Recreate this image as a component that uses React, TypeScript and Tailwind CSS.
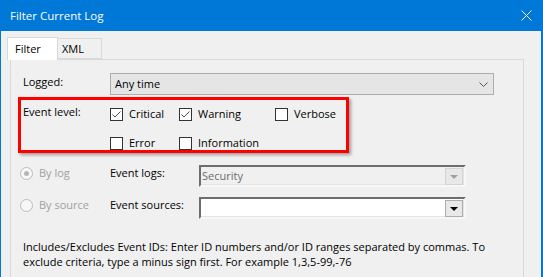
import React from 'react';

const font = "font-['Segoe_UI','Open_Sans',sans-serif]";

function Check({ checked, label }: { checked?: boolean; label: string }) {
  return (
    <div className="flex items-center h-[17px]">
      <span className="w-[13px] h-[13px] border border-[#333] bg-white flex items-center justify-center shrink-0">
        {checked && (
          <svg width="11" height="11" viewBox="0 0 11 11">
            <path d="M1.5 5.5 L4 8 L9.5 2.5" fill="none" stroke="#4d4d4d" strokeWidth="1" />
          </svg>
        )}
      </span>
      <span className="ml-[6px]">{label}</span>
    </div>
  );
}

function Radio({ selected, label }: { selected?: boolean; label: string }) {
  return (
    <div className="relative -top-[3px] flex items-center w-[90px] text-[#a0a0a0]">
      <span className="w-[13px] h-[13px] rounded-full border border-[#bcbcbc] bg-[#f7f7f7] flex items-center justify-center shrink-0">
        {selected && <span className="w-[5px] h-[5px] rounded-full bg-[#b5b5b5]" />}
      </span>
      <span className="ml-[6px]">{label}</span>
    </div>
  );
}

function Combo({ value, disabled }: { value?: string; disabled?: boolean }) {
  return (
    <div
      className={[
        'relative w-[267px] h-[22px] border-2 border-t-[#6d6d6d] border-l-[#6d6d6d] border-r-[#f7f7f7] border-b-[#f7f7f7] shadow-[inset_-1px_-1px_0_#e3e3e3]',
        disabled ? 'bg-[#f0f0f0]' : 'bg-white',
      ].join(' ')}
    >
      <span className="absolute left-[1px] top-[1px] leading-[16px] text-[#6d6d6d]">{value}</span>
      <span
        className={[
          'absolute right-[1px] top-[1px] w-[18px] h-[17px] border flex items-center justify-center',
          disabled ? 'border-[#d4d4d4] bg-[#e8e8e8]' : 'border-[#adadad] bg-[#e8e8e8]',
        ].join(' ')}
      >
        <svg width="8" height="4" viewBox="0 0 8 4">
          <path d="M0 0 H8 L4 4 Z" fill={disabled ? '#a0a0a0' : '#000'} />
        </svg>
      </span>
    </div>
  );
}

export default function App() {
  return (
    <div className={`${font} w-[543px] h-[277px] overflow-hidden bg-[#f0f0f0] border-l border-r-2 border-[#0078d7] text-[11px] text-black`}>
      {/* title bar */}
      <div className="h-[31px] bg-[#0078d7] flex items-center justify-between pl-[9px] pr-[9px] text-white">
        <span className="text-[11.5px]">Filter Current Log</span>
        <svg width="11" height="11" viewBox="0 0 11 11">
          <path d="M0.5 0.5 L10.5 10.5 M10.5 0.5 L0.5 10.5" stroke="#fff" strokeWidth="1" />
        </svg>
      </div>

      {/* tabs */}
      <div className="flex items-end pl-[6px] pt-[6px]">
        <div className="relative z-10 w-[51px] h-[23px] -mb-px bg-white border border-b-0 border-[#d9d9d9] pl-[7px] pt-[3px]">
          Filter
        </div>
        <div className="w-[44px] h-[21px] bg-[#f0f0f0] border border-l-0 border-[#d9d9d9] pl-[4px] pt-[2px]">
          XML
        </div>
      </div>

      {/* tab page */}
      <div className="relative ml-[9px] w-[514px] h-[230px] border border-[#d9d9d9] bg-[#f0f0f0] pl-[12px] pt-[13px]">
        <div className="flex items-center h-[22px]">
          <span className="relative -top-[2px] w-[87px]">Logged:</span>
          <div className="w-[384px] h-[22px] border border-[#adadad] bg-[#e5e5e5] flex items-center justify-between pl-[4px] pr-[5px]">
            <span>Any time</span>
            <svg width="9" height="5" viewBox="0 0 9 5">
              <path d="M0.5 0.5 L4.5 4.5 L8.5 0.5" fill="none" stroke="#555" strokeWidth="1" />
            </svg>
          </div>
        </div>

        <div className="flex mt-[11px]">
          <span className="w-[87px] -mt-[2px]">Event level:</span>
          <div className="grid grid-cols-[69px_96px_80px] gap-y-[12px]">
            <Check checked label="Critical" />
            <Check checked label="Warning" />
            <Check label="Verbose" />
            <Check label="Error" />
            <Check label="Information" />
          </div>
        </div>

        <div className="flex items-center mt-[13px] -ml-[3px]">
          <Radio selected label="By log" />
          <span className="relative -top-[3px] w-[89px]">Event logs:</span>
          <Combo value="Security" disabled />
        </div>

        <div className="flex items-center mt-[10px] -ml-[3px]">
          <Radio label="By source" />
          <span className="relative -top-[3px] w-[89px]">Event sources:</span>
          <Combo />
        </div>

        <p className="mt-[20px] leading-[15px] whitespace-nowrap">
          Includes/Excludes Event IDs: Enter ID numbers and/or ID ranges separated by commas. To
          <br />
          exclude criteria, type a minus sign first. For example 1,3,5-99,-76
        </p>

        {/* annotation box */}
        <div className="absolute left-[7px] top-[37px] w-[331px] h-[56px] border-[3px] border-[#f00] shadow-[2px_2px_3px_rgba(0,0,0,0.35)]" />
      </div>
    </div>
  );
}
